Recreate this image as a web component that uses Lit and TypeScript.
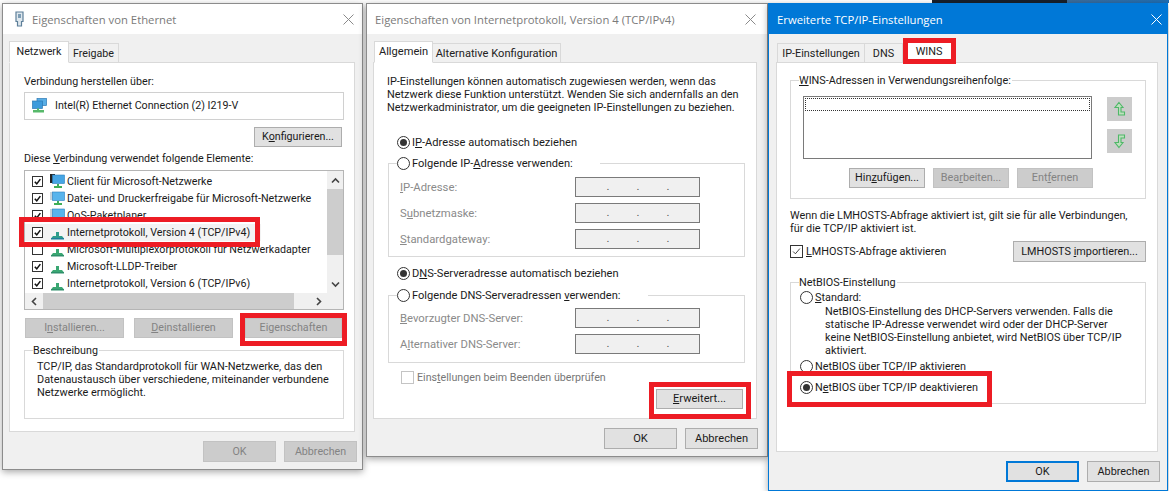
import { LitElement, html, css, svg } from "lit";
import { customElement } from "lit/decorators.js";

const closeX = () => html`<svg class="x" viewBox="0 0 11 11"><path d="M.5.5l10 10M10.5.5l-10 10" fill="none" stroke="currentColor" stroke-width="1"/></svg>`;
const check = () => svg`<path d="M2.200 5.800 4.600 8.400 9 2.600" fill="none" stroke="#111" stroke-width="1.900"/>`;

const foot = svg`<path d="M7 10h2v2h3v2H4v-2h3z" fill="#3fae58"/>`;
const iconClient = () => html`<svg class="ic" viewBox="0 0 15 15"><rect x="0" y="0" width="5" height="9" fill="#222"/><rect x="2.500" y="1" width="12" height="8.500" fill="#46a5e4" stroke="#2b7fbe" stroke-width=".6"/>${foot}</svg>`;
const iconService = () => html`<svg class="ic" viewBox="0 0 15 15"><path d="M0 2h3M0 4h3M0 6h3M0 8h3" stroke="#8fa9b8" stroke-width="1"/><rect x="2.500" y="1" width="12" height="8.500" fill="#58b4ec" stroke="#2b7fbe" stroke-width=".6"/>${foot}</svg>`;
const iconProto = (teal = false) => html`<svg class="ic" viewBox="0 0 15 15"><path d="M6 7h3v4h3l2 2.500H1L3 11h3z" fill="${teal ? "#2f9d8c" : "#3aa772"}"/><path d="M1 13h13v1.500H1z" fill="${teal ? "#1f7f9c" : "#2e8f6a"}"/></svg>`;
const iconDevice = () => html`<svg class="ic" viewBox="0 0 15 15"><rect x="5" y="0.500" width="9.500" height="7" fill="#58aee6" stroke="#2b78b4" stroke-width=".7"/><rect x="0.500" y="3" width="10" height="7.500" fill="#3d9bdc" stroke="#2b78b4" stroke-width=".7"/><path d="M5 10.500h2V12h5v2.500H1V12h4z" fill="#57b96a"/></svg>`;
const arrow = (down = false) => html`<svg class="arr ${down ? "dn" : ""}" viewBox="0 0 13 16"><path d="M6 1.500 10 6.500H8V11h3.500v3H5.500V6.500H2z" fill="#bfe0bf" stroke="#4fb868" stroke-width="1.100"/></svg>`;
const chev = (d: string) => html`<svg class="chev" viewBox="0 0 9 9"><path d="${d}" fill="none" stroke="#444" stroke-width="1.600"/></svg>`;

@customElement("app-root")
export class AppRoot extends LitElement {
  static styles = css`
    :host { display: block; position: relative; width: 1169px; height: 491px; overflow: hidden; background: #fff;
      font: 11.3px/13px Roboto, "Open Sans", sans-serif; color: #1a1a1a; }
    * { box-sizing: border-box; }
    u { text-underline-offset: 1px; }
    p { margin: 0; white-space: nowrap; }
    .photo { position: absolute; top: 0; height: 3px; }
    .p1 { left: 932px; width: 135px; background: #17202c; }
    .p2 { left: 1067px; width: 102px; background: linear-gradient(90deg, #3d6d9c, #1f6fb5); }
    .win { position: absolute; display: flex; flex-direction: column; background: #f0f0f0; border: 1px solid #8c8c8c;
      box-shadow: 0 2px 7px rgba(0,0,0,.35); }
    .w1 { left: 2px; top: 3px; width: 361px; height: 467px; font-size: 10.7px; }
    .w2 { left: 366px; top: 3px; width: 402px; height: 454px; font-size: 11.1px; }
    .w3 { left: 768px; top: 3px; width: 400px; height: 488px; border-color: #0078d7; font-size: 10.85px; }
    .title { height: 30px; flex: none; display: flex; align-items: center; background: #fff; color: #7a7a7a; font: 11.3px/13px "Open Sans", sans-serif; }
    .t1 { padding: 0 8px 0 12px; gap: 8px; }
    .t2 { padding: 0 11px 0 8px; }
    .t3 { padding: 0 5px 0 8px; background: #0078d7; color: #fff; }
    .x { width: 11px; height: 11px; margin-left: auto; display: block; color: #8a8a8a; }
    .t3 .x { color: #fff; }
    .plug { width: 9px; height: 16px; flex: none; }
    .tabs { display: flex; align-items: flex-end; height: 29px; flex: none; position: relative; z-index: 1; margin-bottom: -1px; }
    .w1 .tabs { margin-left: 6px; }
    .w2 .tabs { margin-left: 7px; }
    .w3 .tabs { margin-left: 8px; }
    .tab { height: 20px; background: #f0f0f0; border: 1px solid #d9d9d9; border-left-width: 0; white-space: nowrap;
      display: flex; align-items: center; justify-content: center; color: #222; }
    .tab.on { height: 22px; background: #fff; border-left-width: 1px; border-bottom-color: #fff; padding-bottom: 2px; }
    .t60 { width: 60px; } .t50 { width: 50px; } .t59 { width: 59px; } .t128 { width: 128px; }
    .t88 { width: 88px; border-left-width: 1px; } .t38 { width: 38px; } .t52 { width: 52px; }
    .panel { background: #fff; border: 1px solid #d9d9d9; flex: none; }
    .w1 .panel { margin-left: 6px; width: 346px; height: 370px; padding: 12px 10px 0 14px; }
    .w2 .panel { margin-left: 6px; width: 384px; height: 357px; padding: 12px 13px 0 13px; }
    .w3 .panel { margin-left: 7px; width: 382px; height: 390px; padding: 17px 0 0 13px; }
    .intro { font-size: 10.9px; }
    .foot { display: flex; justify-content: flex-end; gap: 8px; margin-top: 9px; flex: none; }
    .w1 .foot { padding-right: 5px; }
    .w2 .foot { padding-right: 9px; }
    .w3 .foot { padding-right: 7px; }
    .btn { height: 20px; display: block; text-align: center; line-height: 18px; white-space: nowrap; background: #e1e1e1; border: 1px solid #adadad; color: #1a1a1a; flex: none; }
    .btn.off { background: #ccc; border-color: #c2c2c2; color: #838383; }
    .btn.def { border: 2px solid #0078d7; line-height: 17px; }
    .b73 { width: 73px; height: 21px; line-height: 19px; }
    .b88 { width: 88px; margin: 7px 2px 0 auto; }
    .b99 { width: 99px; } .b97 { width: 97px; } .b87 { width: 87px; margin: 4px 0 0 auto; }
    .b76 { width: 76px; } .b133 { width: 133px; height: 21px; line-height: 19px; margin-left: auto; }
    .dev { margin-top: 4px; height: 28px; border: 1px solid #d0d0d0; display: flex; align-items: center; gap: 8px; padding-left: 7px; padding-bottom: 1px; }
    .ic { width: 15px; height: 15px; flex: none; display: block; }
    .lbl2 { margin-top: 5px; }
    .list { margin-top: 5px; height: 140px; border: 1px solid #b5b5b5; display: grid; grid-template-columns: 1fr 16px; grid-template-rows: 1fr 16px; overflow: hidden; }
    .rows { padding-top: 2px; overflow: hidden; min-width: 0; }
    .row { height: 17px; display: flex; align-items: center; padding-left: 7px; white-space: nowrap; }
    .row.sel { background: #f3f3f3; width: 236px; }
    .cb { width: 11px; height: 11px; border: 1px solid #333; background: #fff; flex: none; display: block; }
    .row .ic { margin: 0 2px 0 7px; }
    .vbar { background: #f0f0f0; display: grid; grid-template-rows: 18px 66px 1fr 18px; justify-items: stretch; }
    .thumb { background: #cdcdcd; }
    .hbar { grid-column: 1 / 3; background: #f0f0f0; display: grid; grid-template-columns: 18px 251px 1fr 18px 16px; }
    .arrowcell { display: flex; align-items: center; justify-content: center; }
    .chev { width: 9px; height: 9px; }
    .btnrow { display: flex; margin: 8px 0 0 1px; }
    .g10 { margin-right: 10px; } .g12 { margin-right: 12px; }
    .desc { margin-top: 12px; height: 69px; border: 1px solid #d9d9d9; padding-left: 8px; }
    .legend { display: table; margin-top: -7px; background: #fff; padding: 0 1px 0 0; color: #1a1a1a; }
    .desc p { margin: 3px 0 0 4px; font-size: 10.9px; }
    .radio { display: flex; align-items: center; gap: 2px; height: 16px; white-space: nowrap; }
    .dot { width: 13px; height: 13px; border: 1px solid #333; border-radius: 50%; flex: none; display: flex; align-items: center; justify-content: center; background: #fff; }
    .dot.on::after { content: ""; width: 7px; height: 7px; border-radius: 50%; background: #333; }
    .r1 { margin: 20px 0 0 10px; }
    .r3 { margin: 8px 0 0 10px; }
    .grp { margin-left: 1px; width: 357px; border: 1px solid #d9d9d9; padding-left: 8px; }
    .g1 { margin-top: 13px; height: 94px; }
    .g2 { margin-top: 14px; height: 68px; }
    .hd { margin-top: -9px; background: #fff; }
    .h1 { width: 203px; } .h2 { width: 251px; }
    .fields { display: grid; grid-template-columns: 175px 125px; row-gap: 6px; margin-left: 3px; align-items: center; color: #8a8a8a; white-space: nowrap; font-size: 11.3px; }
    .g1 .fields { margin-top: 6px; }
    .g2 .fields { margin-top: 5px; }
    .ip { height: 20px; background: #f0f0f0; border: 1px solid #7a7a7a; display: grid; grid-template-columns: repeat(3, 30px); padding-left: 17px; justify-items: center; line-height: 18px; color: #555; }
    .chk { display: flex; align-items: center; gap: 3px; margin: 6px 0 0 14px; height: 16px; color: #777; white-space: nowrap; font-size: 10.7px; }
    .cb13 { width: 13px; height: 13px; border: 1px solid #c4c4c4; flex: none; display: block; }
    .cb13.dark { border-color: #333; }
    .wg { width: 356px; border: 1px solid #d9d9d9; padding-left: 8px; }
    .wg1 { height: 119px; }
    .wg2 { height: 122px; margin-top: 20px; }
    .addr { display: flex; margin: 9px 0 0 4px; }
    .addrlist { width: 289px; height: 63px; border: 1px solid #7a7a7a; padding: 1px; }
    .focus { height: 13px; width: 100%; border: 1px dotted #333; }
    .arrows { display: flex; flex-direction: column; gap: 8px; margin: 1px 0 0 15px; }
    .ab { width: 25px; height: 24px; background: #ccc; display: flex; align-items: center; justify-content: center; }
    .arr { width: 13px; height: 16px; }
    .arr.dn { transform: rotate(180deg) scaleX(-1); }
    .acts { display: flex; gap: 8px; margin: 9px 0 0 50px; }
    .wtext { margin-top: 10px; }
    .lm { display: flex; align-items: center; gap: 3px; width: 356px; margin-top: 6px; }
    .n1 { height: 16px; margin-left: 1px; }
    .nd { margin-left: 26px; }
    .n2 { margin: 1px 0 0 1px; }
    .n3 { margin: 5px 0 0 1px; }
    .red { position: absolute; border: 5px solid #ed1c24; z-index: 5; }
    .rd1 { left: 19px; top: 217px; width: 241px; height: 30px; }
    .rd2 { left: 240px; top: 313px; width: 107px; height: 33px; }
    .rd3 { left: 649px; top: 382px; width: 102px; height: 37px; }
    .rd4 { left: 903px; top: 38px; width: 53px; height: 26px; }
    .rd5 { left: 787px; top: 371px; width: 205px; height: 36px; }
  `;

  private radio(text: unknown, on = false, cls = "") {
    return html`<div class="radio ${cls}"><span class="dot ${on ? "on" : ""}"></span><span>${text}</span></div>`;
  }
  private cbx() { return html`<svg class="cb" viewBox="0 0 11 11">${check()}</svg>`; }
  private ip() { return html`<div class="ip"><span>.</span><span>.</span><span>.</span></div>`; }
  private row(text: string, icon: unknown, on = true, sel = false) {
    return html`<div class="row ${sel ? "sel" : ""}">${on ? this.cbx() : html`<span class="cb"></span>`}${icon}<span>${text}</span></div>`;
  }

  render() {
    return html`
      <div class="photo p1"></div><div class="photo p2"></div>

      <section class="win w1">
        <div class="title t1">
          <svg class="plug" viewBox="0 0 9 16"><path d="M1 1h7v9.500H6.500V15h-4v-4.500H1z" fill="#dfe8ee" stroke="#5d7f99" stroke-width="1.200"/><path d="M3 3h3v4H3z" fill="#7d9db5"/></svg>
          <span>Eigenschaften von Ethernet</span>${closeX()}
        </div>
        <div class="tabs"><div class="tab on t60">Netzwerk</div><div class="tab t50">Freigabe</div></div>
        <div class="panel">
          <p>Verbindung herstellen über:</p>
          <div class="dev">${iconDevice()}<span>Intel(R) Ethernet Connection (2) I219-V</span></div>
          <div class="btn b88">K<u>o</u>nfigurieren...</div>
          <p class="lbl2">Diese <u>V</u>erbindung verwendet folgende Elemente:</p>
          <div class="list">
            <div class="rows">
              ${this.row("Client für Microsoft-Netzwerke", iconClient())}
              ${this.row("Datei- und Druckerfreigabe für Microsoft-Netzwerke", iconService())}
              ${this.row("QoS-Paketplaner", iconService())}
              ${this.row("Internetprotokoll, Version 4 (TCP/IPv4)", iconProto(true), true, true)}
              ${this.row("Microsoft-Multiplexorprotokoll für Netzwerkadapter", iconProto(), false)}
              ${this.row("Microsoft-LLDP-Treiber", iconProto())}
              ${this.row("Internetprotokoll, Version 6 (TCP/IPv6)", iconProto())}
            </div>
            <div class="vbar">
              <div class="arrowcell">${chev("M1 6.500 4.500 3 8 6.500")}</div><div class="thumb"></div><div></div>
              <div class="arrowcell">${chev("M1 2.500 4.500 6 8 2.500")}</div>
            </div>
            <div class="hbar">
              <div class="arrowcell">${chev("M6 1 2.500 4.500 6 8")}</div><div class="thumb"></div><div></div>
              <div class="arrowcell">${chev("M3 1 6.500 4.500 3 8")}</div><div></div>
            </div>
          </div>
          <div class="btnrow">
            <div class="btn off b99 g10">I<u>n</u>stallieren...</div>
            <div class="btn off b99 g12"><u>D</u>einstallieren</div>
            <div class="btn off b97">Eigenschaften</div>
          </div>
          <div class="desc">
            <span class="legend">Beschreibung</span>
            <p>TCP/IP, das Standardprotokoll für WAN-Netzwerke, das den<br>Datenaustausch über verschiedene, miteinander verbundene<br>Netzwerke ermöglicht.</p>
          </div>
        </div>
        <div class="foot"><div class="btn off b73">OK</div><div class="btn off b73">Abbrechen</div></div>
      </section>

      <section class="win w2">
        <div class="title t2"><span>Eigenschaften von Internetprotokoll, Version 4 (TCP/IPv4)</span>${closeX()}</div>
        <div class="tabs"><div class="tab on t59">Allgemein</div><div class="tab t128">Alternative Konfiguration</div></div>
        <div class="panel">
          <p class="intro">IP-Einstellungen können automatisch zugewiesen werden, wenn das<br>Netzwerk diese Funktion unterstützt. Wenden Sie sich andernfalls an den<br>Netzwerkadministrator, um die geeigneten IP-Einstellungen zu beziehen.</p>
          ${this.radio(html`I<u>P</u>-Adresse automatisch beziehen`, true, "r1")}
          <div class="grp g1">
            ${this.radio(html`Folgende IP-<u>A</u>dresse verwenden:`, false, "hd h1")}
            <div class="fields">
              <span><u>I</u>P-Adresse:</span>${this.ip()}
              <span>S<u>u</u>bnetzmaske:</span>${this.ip()}
              <span><u>S</u>tandardgateway:</span>${this.ip()}
            </div>
          </div>
          ${this.radio(html`D<u>N</u>S-Serveradresse automatisch beziehen`, true, "r3")}
          <div class="grp g2">
            ${this.radio(html`Folgende DNS-Serveradressen <u>v</u>erwenden:`, false, "hd h2")}
            <div class="fields">
              <span><u>B</u>evorzugter DNS-Server:</span>${this.ip()}
              <span>A<u>l</u>ternativer DNS-Server:</span>${this.ip()}
            </div>
          </div>
          <div class="chk"><span class="cb13"></span><span>Eins<u>t</u>ellungen beim Beenden überprüfen</span></div>
          <div class="btn b87"><u>E</u>rweitert...</div>
        </div>
        <div class="foot"><div class="btn b73">OK</div><div class="btn b73">Abbrechen</div></div>
      </section>

      <section class="win w3">
        <div class="title t3"><span>Erweiterte TCP/IP-Einstellungen</span>${closeX()}</div>
        <div class="tabs"><div class="tab t88">IP-Einstellungen</div><div class="tab t38">DNS</div><div class="tab on t52">WINS</div></div>
        <div class="panel">
          <div class="wg wg1">
            <span class="legend"><u>W</u>INS-Adressen in Verwendungsreihenfolge:</span>
            <div class="addr">
              <div class="addrlist"><div class="focus"></div></div>
              <div class="arrows"><div class="ab">${arrow()}</div><div class="ab">${arrow(true)}</div></div>
            </div>
            <div class="acts">
              <div class="btn b76">Hin<u>z</u>ufügen...</div>
              <div class="btn off b76">Bea<u>r</u>beiten...</div>
              <div class="btn off b76">Ent<u>f</u>ernen</div>
            </div>
          </div>
          <p class="wtext">Wenn die LMHOSTS-Abfrage aktiviert ist, gilt sie für alle Verbindungen,<br>für die TCP/IP aktiviert ist.</p>
          <div class="lm">
            <svg class="cb13 dark" viewBox="0 0 13 13"><path d="M2.500 6.500 5.200 9.200 10.500 3" fill="none" stroke="#222" stroke-width="1"/></svg>
            <span><u>L</u>MHOSTS-Abfrage aktivieren</span>
            <div class="btn b133">LMHOSTS <u>i</u>mportieren...</div>
          </div>
          <div class="wg wg2">
            <span class="legend">NetBIOS-Einstellung</span>
            ${this.radio(html`<u>S</u>tandard:`, false, "n1")}
            <p class="nd">NetBIOS-Einstellung des DHCP-Servers verwenden. Falls die<br>statische IP-Adresse verwendet wird oder der DHCP-Server<br>keine NetBIOS-Einstellung anbietet, wird NetBIOS über TCP/IP<br>aktiviert.</p>
            ${this.radio("NetBIOS über TCP/IP aktivieren", false, "n2")}
            ${this.radio(html`N<u>e</u>tBIOS über TCP/IP deaktivieren`, true, "n3")}
          </div>
        </div>
        <div class="foot"><div class="btn def b73">OK</div><div class="btn b73">Abbrechen</div></div>
      </section>

      <div class="red rd1"></div><div class="red rd2"></div><div class="red rd3"></div><div class="red rd4"></div><div class="red rd5"></div>
    `;
  }
}
